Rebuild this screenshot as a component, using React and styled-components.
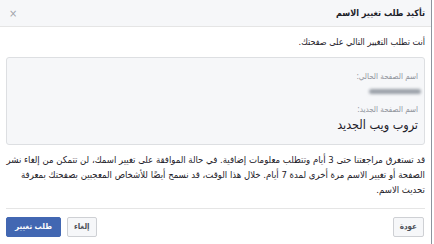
import React from 'react'
import styled, { createGlobalStyle } from 'styled-components'

const GlobalStyle = createGlobalStyle`
  html, body {
    margin: 0;
    padding: 0;
    background: #fff;
  }
  body {
    font-family: "DejaVu Sans Condensed", "DejaVu Sans", sans-serif;
    width: 434px;
    height: 244px;
    overflow: hidden;
  }
`

const App = () => {
  return (
    <>
      <GlobalStyle />
      <Dialog dir="rtl">
        <Header>
          <Title>تأكيد طلب تغيير الاسم</Title>
          <Close>×</Close>
        </Header>
        <Body>
          <Intro>أنت تطلب التغيير التالي على صفحتك.</Intro>
          <NameBox>
            <Label>اسم الصفحة الحالي:</Label>
            <Blurred />
            <Label>اسم الصفحة الجديد:</Label>
            <NewName>تروب ويب الجديد</NewName>
          </NameBox>
          <Note>
            قد تستغرق مراجعتنا حتى 3 أيام وتتطلب معلومات إضافية. في حالة الموافقة على تغيير اسمك، لن تتمكن من إلغاء نشر الصفحة أو تغيير الاسم مرة أخرى لمدة 7 أيام. خلال هذا الوقت، قد نسمح أيضًا للأشخاص المعجبين بصفحتك بمعرفة تحديث الاسم.
          </Note>
        </Body>
        <Footer>
          <Button>عودة</Button>
          <Spacer />
          <Button>إلغاء</Button>
          <Button primary>طلب تغيير</Button>
        </Footer>
      </Dialog>
    </>
  )
}

const Dialog = styled.div`
  width: 432px;
  height: 244px;
  border-right: 1px solid #8d949e;
  box-sizing: border-box;
  direction: rtl;
  background: #fff;
  display: flex;
  flex-direction: column;
`

const Header = styled.div`
  height: 26px;
  background: #f6f7f9;
  border-bottom: 1px solid #e5e5e5;
  display: flex;
  align-items: center;
  justify-content: space-between;
  padding: 0 6px 0 9px;
`

const Title = styled.div`
  font-size: 9px;
  font-weight: bold;
  color: #1d2129;
`

const Close = styled.div`
  font-size: 11px;
  color: #a0a4ab;
  line-height: 1;
`

const Body = styled.div`
  padding: 0 6px 0 6px;
`

const Intro = styled.div`
  font-size: 9px;
  color: #1d2129;
  margin-top: 7px;
  height: 16px;
  line-height: 16px;
`

const NameBox = styled.div`
  margin-top: 7px;
  height: 88px;
  background: #f6f7f9;
  border: 1px solid #dddfe2;
  border-radius: 3px;
  padding: 11px 6px 0 0;
  box-sizing: border-box;
  display: flex;
  flex-direction: column;
  align-items: flex-start;
`

const Label = styled.div`
  font-size: 8px;
  color: #90949c;
  line-height: 12px;
  margin-top: 2px;
`

const Blurred = styled.div`
  width: 52px;
  height: 5px;
  margin: 6px -3px 8px 0;
  background: #9aa0a8;
  border-radius: 3px;
  filter: blur(1.5px);
`

const NewName = styled.div`
  font-size: 12.5px;
  color: #1d2129;
  line-height: 17px;
`

const Note = styled.div`
  margin-top: 7px;
  font-size: 9.5px;
  line-height: 15px;
  color: #1d2129;
  padding-bottom: 11px;
  border-bottom: 1px solid #e5e5e5;
`

const Footer = styled.div`
  display: flex;
  align-items: center;
  gap: 6px;
  padding: 8px 7px 0 6px;
`

const Spacer = styled.div`
  flex: 1;
`

const Button = styled.div`
  height: 18px;
  line-height: 18px;
  padding: 0 ${p => (p.primary ? 8 : 6)}px;
  font-size: 8px;
  font-weight: bold;
  border-radius: 2px;
  border: 1px solid ${p => (p.primary ? '#4267b2' : '#ced0d4')};
  background: ${p => (p.primary ? '#4267b2' : '#f6f7f9')};
  color: ${p => (p.primary ? '#fff' : '#4b4f56')};
`

export default App
